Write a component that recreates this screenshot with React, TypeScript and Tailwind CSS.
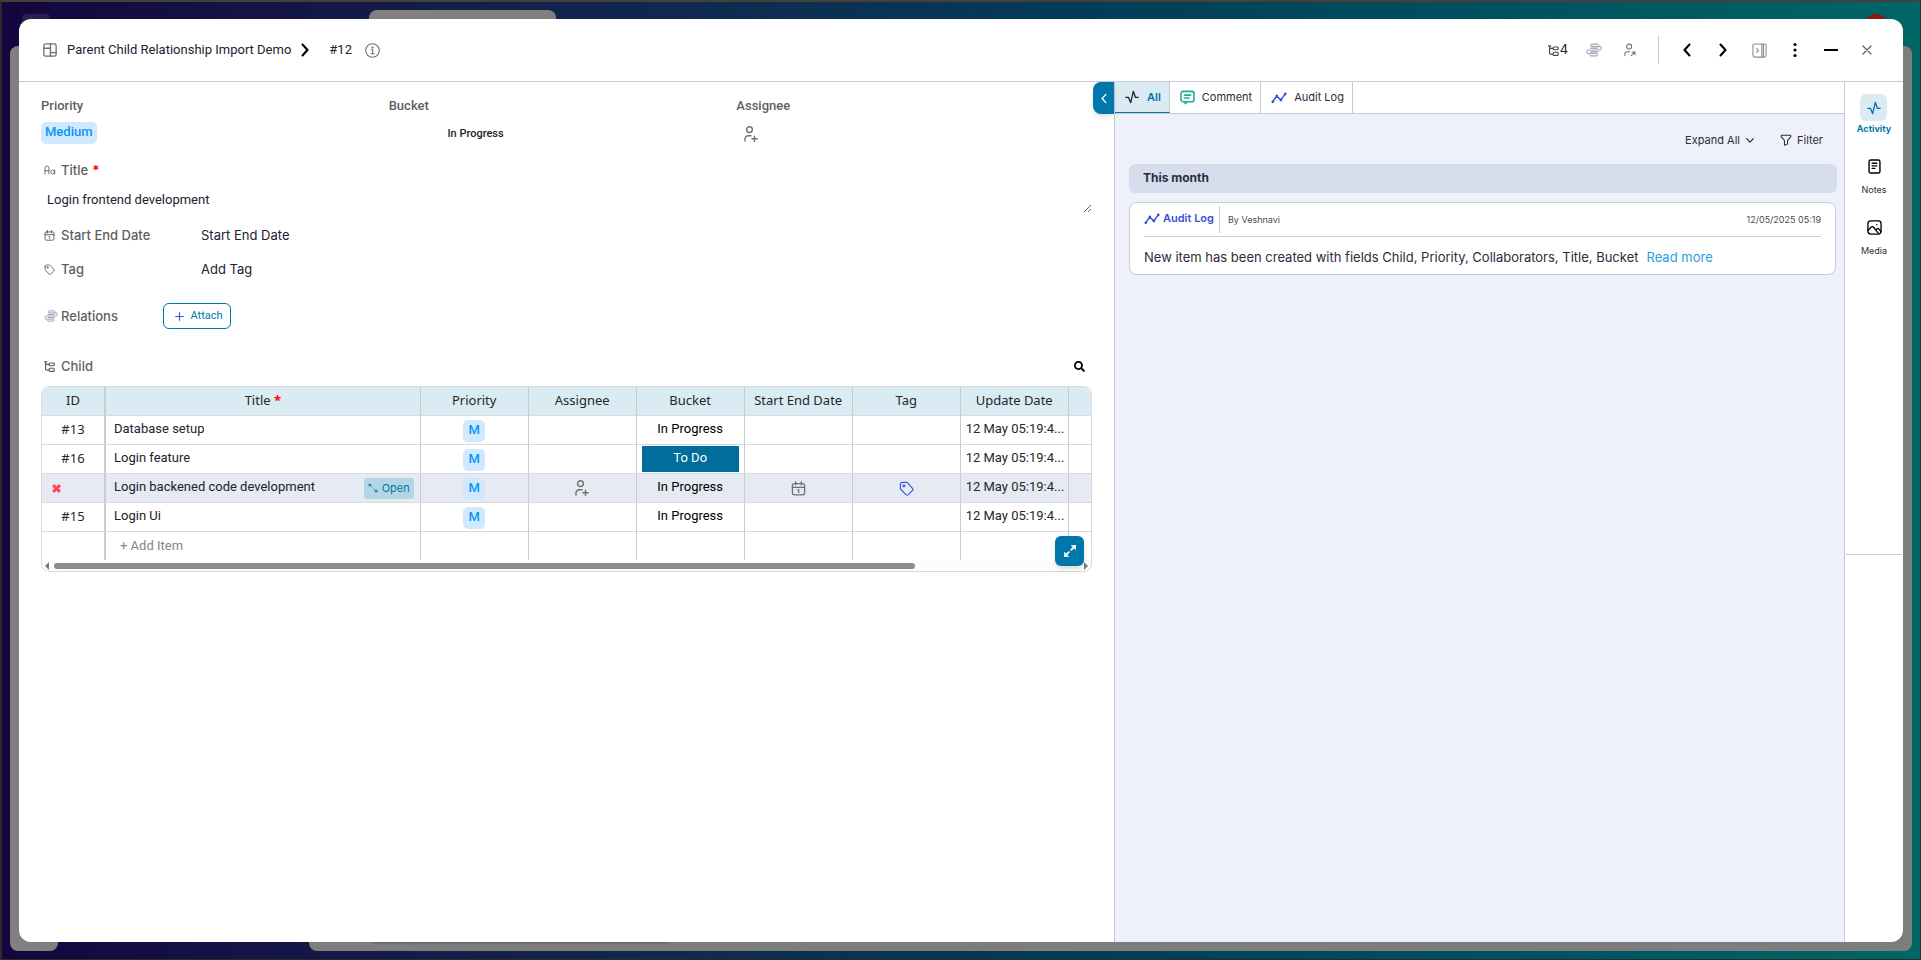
import { useState } from "react";
import type { ReactNode } from "react";
import { FaSearch } from "react-icons/fa";

type IconProps = { className?: string };

function Svg({ className = "", box = "0 0 16 16", width = 1.2, children }: IconProps & { box?: string; width?: number; children: ReactNode }) {
  return (
    <svg className={className} viewBox={box} fill="none" stroke="currentColor" strokeWidth={width} strokeLinecap="round" strokeLinejoin="round" aria-hidden="true">
      {children}
    </svg>
  );
}

const BoardIcon = ({ className }: IconProps) => (
  <Svg className={className} width={1.5}>
    <rect x="1" y="1" width="14" height="14" rx="2" />
    <path d="M8.500 1v14M1 6h7.500M8.500 11h6.500" />
  </Svg>
);

const InfoIcon = ({ className }: IconProps) => (
  <Svg className={className} width={1.2}>
    <circle cx="8" cy="8" r="7.200" />
    <path d="M6.700 7.200H8.200V11.300M6.500 11.400h3.300" />
    <circle cx="8" cy="4.800" r="0.600" fill="currentColor" />
  </Svg>
);

const TreeIcon = ({ className }: IconProps) => (
  <Svg className={className} box="0 0 14 14" width={1.5}>
    <path d="M2 1v9.500a1 1 0 0 0 1 1H6M2 4.300H6M0.800 1.200h2.700" />
    <rect x="6.500" y="2.500" width="6.500" height="3.500" rx="1.200" />
    <rect x="6.500" y="9.200" width="6.500" height="4" rx="1.200" />
  </Svg>
);

const RelationIcon = ({ className }: IconProps) => (
  <Svg className={className} box="0 0 18 16" width={1.1}>
    <rect x="5" y="5.500" width="8.500" height="5" fill="#cfd5e3" stroke="none" />
    <path d="M15.500 3.800H6.500a1.300 1.300 0 0 1 0-2.600H13a2 2 0 0 1 1.500 1M15.500 3.800a2.100 2.100 0 0 1 0 4.200H14" />
    <path d="M2.800 12.200h9a1.300 1.300 0 0 1 0 2.600H5.300a2 2 0 0 1-1.500-1M2.800 12.200a2.100 2.100 0 0 1 0-4.200H4.300" />
    <path d="M5 5.800h8.500M5 10.200h8.500" />
  </Svg>
);

const PersonLinkIcon = ({ className }: IconProps) => (
  <Svg className={className} box="0 0 14 16" width={1.3}>
    <circle cx="6" cy="4" r="2.900" />
    <path d="M1 14.500v-1.700a2.800 2.800 0 0 1 2.800-2.800H6.500M8.500 14.500l4-4M9.500 10.300h3.200v3.200" />
  </Svg>
);

const PersonAddIcon = ({ className }: IconProps) => (
  <Svg className={className} box="0 0 14 16" width={1.4}>
    <circle cx="5.500" cy="3.600" r="2.900" />
    <path d="M1 15v-2a3.200 3.200 0 0 1 3.200-3.200H7M10.500 10.200v5.200M7.900 12.800h5.300" />
  </Svg>
);

const PanelIcon = ({ className }: IconProps) => (
  <Svg className={className} width={1.2}>
    <rect x="1" y="1" width="14" height="14" rx="2" />
    <path d="M10.500 1v14M12.200 1v14M5 6l2 2-2 2" />
  </Svg>
);

const CalendarIcon = ({ className }: IconProps) => (
  <Svg className={className} width={1.4}>
    <rect x="1.500" y="2.800" width="13" height="12" rx="2" />
    <path d="M1.500 6.800h13M5 0.800v3.400M11 0.800v3.400M7.300 9.600h0.900v2.600" />
  </Svg>
);

const TagIcon = ({ className }: IconProps) => (
  <Svg className={className} width={1.3}>
    <path d="M1.500 3.500v4.200a2 2 0 0 0 .6 1.400l5.300 5.400a1.800 1.800 0 0 0 2.500 0l4.300-4.200a1.800 1.800 0 0 0 0-2.600L9.200 2.100A2 2 0 0 0 7.800 1.500H3.500a2 2 0 0 0-2 2z" />
    <circle cx="5.200" cy="5" r="1" />
  </Svg>
);

const LetterCaseIcon = ({ className }: IconProps) => (
  <Svg className={className} box="0 0 16 14" width={1.2}>
    <path d="M1 12.500V4.200A2.700 2.700 0 0 1 3.700 1.500a2.700 2.700 0 0 1 2.700 2.700v8.300M1 8h5.400M14.500 7v5.500" />
    <circle cx="11.700" cy="9.800" r="2.700" />
  </Svg>
);

const PulseIcon = ({ className }: IconProps) => (
  <Svg className={className} width={1.5}>
    <path d="M1 8.500h3L6.500 14.500 9.500 1.500 12 8.500h3" />
  </Svg>
);

const CommentIcon = ({ className }: IconProps) => (
  <Svg className={className} width={1.7}>
    <path d="M3.500 1.500h9a2.500 2.500 0 0 1 2.500 2.500v6a2.500 2.500 0 0 1-2.500 2.500H8L5.500 14.500V12.500h-2A2.500 2.500 0 0 1 1 10V4a2.500 2.500 0 0 1 2.500-2.500z" />
    <path d="M4.800 5.500h6.500M4.800 8.500h4.800" />
  </Svg>
);

const TrendIcon = ({ className }: IconProps) => (
  <Svg className={className} box="0 0 16 12" width={1.4}>
    <path d="M1.800 9.500 5.800 4 9.800 8 14 2.200" />
    <g fill="currentColor" stroke="none">
      <circle cx="1.800" cy="9.800" r="1.400" />
      <circle cx="5.800" cy="3.800" r="1.300" />
      <circle cx="9.900" cy="8" r="1.400" />
      <circle cx="14.200" cy="2" r="1.400" />
    </g>
  </Svg>
);

const FilterIcon = ({ className }: IconProps) => (
  <Svg className={className} box="0 0 14 14" width={1.2}>
    <path d="M1.500 1.500h11v1.800L8.800 7.500v4.300L5.200 13V7.500L1.500 3.300z" />
  </Svg>
);

const NotesIcon = ({ className }: IconProps) => (
  <Svg className={className} width={1.5}>
    <rect x="2.200" y="1" width="11.600" height="14" rx="1.800" />
    <path d="M5.500 4.500h5M5.500 7.300h5M5.500 10h3" />
  </Svg>
);

const MediaIcon = ({ className }: IconProps) => (
  <Svg className={className} width={1.4}>
    <rect x="1" y="1" width="14" height="14" rx="3" />
    <path d="M1.200 11 4.500 7.500a1.500 1.500 0 0 1 2.200 0L12 14M9.500 10.500l1-1a1.500 1.500 0 0 1 2 0L14.800 12M10.300 5h.2" />
  </Svg>
);

const Chevron = ({ className, left, width = 2.1 }: IconProps & { left?: boolean; width?: number }) => (
  <Svg className={className} box="0 0 8 14" width={width}>
    <path d={left ? "M6.500 1.500 1.500 7l5 5.500" : "M1.500 1.500 6.500 7l-5 5.500"} />
  </Svg>
);

const ExpandIcon = ({ className }: IconProps) => (
  <Svg className={className} box="0 0 14 14" width={1.8}>
    <path d="M8.200 5.800 12 2M5.800 8.200 2 12" />
    <path d="M8.500 1.500h4v4zM1.500 8.500v4h4z" fill="currentColor" strokeWidth="0.600" />
  </Svg>
);

const OpenIcon = ({ className }: IconProps) => (
  <Svg className={className} box="0 0 14 14" width={1.3}>
    <path d="M2 2l3.500 3.500M12 12 8.500 8.500" />
    <path d="M1.500 1.500h3L1.500 4.500zM12.500 12.500h-3l3-3z" fill="currentColor" strokeWidth="0.600" />
  </Svg>
);

type Row = { id: string; title: string; bucket: string; updated: string; active?: boolean };

const rows: Row[] = [
  { id: "#13", title: "Database setup", bucket: "In Progress", updated: "12 May 05:19:4..." },
  { id: "#16", title: "Login feature", bucket: "To Do", updated: "12 May 05:19:4..." },
  { id: "#14", title: "Login backened code development", bucket: "In Progress", updated: "12 May 05:19:4...", active: true },
  { id: "#15", title: "Login Ui", bucket: "In Progress", updated: "12 May 05:19:4..." },
];

const columns = ["Priority", "Assignee", "Bucket", "Start End Date", "Tag", "Update Date"];

function HeaderButton({ label, className = "", children }: { label: string; className?: string; children: ReactNode }) {
  return (
    <button type="button" aria-label={label} className={`flex h-8 w-9 items-center justify-center ${className}`}>
      {children}
    </button>
  );
}

function Backdrop() {
  return (
    <div aria-hidden="true" className="absolute inset-0 overflow-hidden border-2 border-r-1 border-b-1 border-[#2b2b2b] border-t-[#45403c] bg-linear-to-r from-[#14053f] via-[#023b56] via-55% to-[#006666]">
      <div className="absolute top-3 left-5 h-8 w-7 rounded bg-[#26204f]" />
      <div className="absolute top-2 left-[367px] h-8 w-[187px] rounded-lg bg-[#808080]" />
      <div className="absolute top-3 right-8 h-6 w-6 rounded-full bg-[#8a1a14]" />
      <div className="absolute top-11 bottom-2 left-2 w-12 rounded-lg bg-[#808080]" />
      <div className="absolute top-11 right-2 bottom-2 left-[307px] rounded-lg bg-[#7d7d7d]" />
      <div className="absolute bottom-4 left-[372px] h-4 w-[296px] bg-[#5c5c5c] blur-[1px]" />
    </div>
  );
}

function Header() {
  return (
    <header className="flex h-[63px] shrink-0 items-start justify-between border-b border-[#c6c8d3] pt-[15px] pr-[18px] pl-6">
      <div className="flex h-8 items-center font-[Roboto] text-[13px] text-[#20222e]">
        <BoardIcon className="size-[14px] text-[#6f6f6f]" />
        <a href="#board" className="ml-[10px]">Parent Child Relationship Import Demo</a>
        <Chevron className="mr-5 ml-[10px] h-[14px] w-2 text-black" />
        <span>#12</span>
        <InfoIcon className="ml-[13px] size-[15px] text-[#6f6f6f]" />
      </div>
      <div className="flex items-center">
        <HeaderButton label="Child items" className="gap-px text-[#4a4a55]">
          <TreeIcon className="size-[11px]" />
          <span className="font-[Inter] text-[13px] text-[#20222e]">4</span>
        </HeaderButton>
        <HeaderButton label="Relations" className="text-[#8d95a6]">
          <RelationIcon className="h-[14px] w-4" />
        </HeaderButton>
        <HeaderButton label="Share" className="text-[#6f6f6f]">
          <PersonLinkIcon className="h-[14px] w-3" />
        </HeaderButton>
        <div className="mx-[10px] h-7 w-px bg-[#c6c8d3]" />
        <HeaderButton label="Previous" className="text-black"><Chevron left className="h-[14px] w-2" /></HeaderButton>
        <HeaderButton label="Next" className="text-black"><Chevron className="h-[14px] w-2" /></HeaderButton>
        <HeaderButton label="Toggle panel" className="text-[#8a8d99]"><PanelIcon className="size-[15px]" /></HeaderButton>
        <HeaderButton label="More">
          <svg className="h-4 w-1" viewBox="0 0 4 16" aria-hidden="true">
            <circle cx="2" cy="2.500" r="1.600" />
            <circle cx="2" cy="8" r="1.600" />
            <circle cx="2" cy="13.500" r="1.600" />
          </svg>
        </HeaderButton>
        <HeaderButton label="Minimize"><span className="h-[2px] w-[14px] bg-black" /></HeaderButton>
        <HeaderButton label="Close" className="text-[#5f5f5f]">
          <Svg className="size-[10px]" box="0 0 10 10" width={1.2}><path d="M1 1l8 8M9 1 1 9" /></Svg>
        </HeaderButton>
      </div>
    </header>
  );
}

function FieldLabel({ icon, children }: { icon: ReactNode; children: ReactNode }) {
  return (
    <span className="flex items-center text-[13px] leading-5 font-medium text-[#5f5f5f]">
      <span className="flex w-5 justify-start pl-[3px]">{icon}</span>
      {children}
    </span>
  );
}

function Priority({ children }: { children: ReactNode }) {
  return (
    <span className="inline-flex h-[22px] min-w-[22px] items-center justify-center rounded-[5px] bg-[#d0e9ff] px-1 pb-[2px] font-[Roboto] text-[13px] font-medium text-[#0a95f5]">
      {children}
    </span>
  );
}

function ChildTable() {
  const [items] = useState(rows);

  return (
    <div className="relative rounded-lg border border-[#d9dadd]">
      <div className="overflow-hidden rounded-t-lg">
        <table className="w-full table-fixed border-separate border-spacing-0 font-['Noto_Sans'] text-[13px] leading-5 text-[#26262b] [&_td]:border-b [&_td]:border-[#d9dadd] [&_td:not(:last-child)]:border-r [&_td:not(:last-child)]:border-r-[#cbccd2] [&_th]:border-b [&_th]:border-[#d9dadd] [&_th:not(:last-child)]:border-r [&_th:not(:last-child)]:border-r-[#cbccd2] [&_tr>:first-child]:border-r-2">
          <colgroup>
            <col className="w-16" />
            <col className="w-[30%]" />
            {columns.map((c) => <col key={c} className="w-[108px]" />)}
            <col />
          </colgroup>
          <thead>
            <tr className="h-[29px] bg-[#daebf3] [&>th]:p-0 [&>th]:pb-[3px] [&>th]:font-normal">
              <th>ID</th>
              <th>Title <span className="font-bold text-[#f00]">*</span></th>
              {columns.map((c) => <th key={c}>{c}</th>)}
              <th aria-label="More columns" />
            </tr>
          </thead>
          <tbody className="text-center">
            {items.map((row) => (
              <tr key={row.id} className={`h-[29px] [&>td]:p-0 ${row.active ? "bg-[#e6eaf3]" : "bg-white"}`}>
                <td>
                  {row.active ? (
                    <button type="button" aria-label="Remove" className="flex w-full pl-[10px] text-[#ff4a55]">
                      <svg className="size-[9px]" viewBox="0 0 10 10" stroke="currentColor" strokeWidth="3.400" aria-hidden="true"><path d="M1.200 1.200l7.600 7.600M8.800 1.200 1.200 8.800" /></svg>
                    </button>
                  ) : (
                    <div className="pb-[2px]">{row.id}</div>
                  )}
                </td>
                <td>
                  <div className="flex items-center justify-between pr-[6px] pl-2 font-[Roboto]">
                    <span className="truncate pb-[2px] text-[#20222e]">{row.title}</span>
                    {row.active && (
                      <button type="button" className="flex h-[21px] w-[50px] items-center justify-center gap-1 rounded-[3px] bg-[#b4d5e4] font-[Inter] text-[11px] text-[#0077ab]">
                        <OpenIcon className="size-[10px]" />
                        Open
                      </button>
                    )}
                  </div>
                </td>
                <td><div className="flex justify-center pt-[2px]"><Priority>M</Priority></div></td>
                <td>{row.active && <PersonAddIcon className="mx-auto h-4 w-[14px] text-[#6f6f6f]" />}</td>
                <td>
                  {row.bucket === "To Do" ? (
                    <div className="mx-[5px] h-[26px] bg-[#006d9c] pt-[2px] font-[Roboto] text-white">{row.bucket}</div>
                  ) : (
                    <div className="pb-[2px] font-[Roboto] text-black">{row.bucket}</div>
                  )}
                </td>
                <td>{row.active && <CalendarIcon className="mx-auto size-[15px] text-[#6f6f6f]" />}</td>
                <td>{row.active && <TagIcon className="mx-auto size-[15px] text-[#3f55e0]" />}</td>
                <td><div className="overflow-hidden pb-[2px] pl-[5px] text-left font-[Roboto] whitespace-nowrap">{row.updated}</div></td>
                <td />
              </tr>
            ))}
            <tr className="h-7 [&>td]:border-b-0 [&>td]:p-0">
              <td />
              <td>
                <button type="button" className="flex pl-[14px] font-[Roboto] text-[#868686]">+ Add Item</button>
              </td>
              {columns.map((c) => <td key={c} />)}
              <td />
            </tr>
          </tbody>
        </table>
      </div>
      {/* scroll bar */}
      <div className="flex h-[11px] items-center rounded-b-lg bg-[#fcfcfc] px-[3px]">
        <svg className="h-2 w-1" viewBox="0 0 4 8" fill="#7d7d7d" aria-hidden="true"><path d="M4 0v8L0 4z" /></svg>
        <div className="mx-[5px] flex-1"><div className="h-[6px] w-[84%] rounded-full bg-[#8b8b8b]" /></div>
        <svg className="h-2 w-1" viewBox="0 0 4 8" fill="#7d7d7d" aria-hidden="true"><path d="M0 0v8l4-4z" /></svg>
      </div>
      <button type="button" aria-label="Expand table" className="absolute right-[7px] bottom-[5px] flex h-[30px] w-[29px] items-center justify-center rounded-md bg-[#0077ab] text-white shadow-md">
        <ExpandIcon className="size-[14px]" />
      </button>
    </div>
  );
}

function Details() {
  const [title, setTitle] = useState("Login frontend development");

  return (
    <main className="min-w-0 px-[22px] pt-[14px] font-[Inter]">
      <div className="mr-2 grid grid-cols-3 font-[Roboto]">
        <div>
          <div className="text-[13px] leading-5 font-medium text-[#5f5f5f]">Priority</div>
          <div className="mt-[6px] flex"><Priority>Medium</Priority></div>
        </div>
        <div>
          <div className="text-[13px] leading-5 font-medium text-[#5f5f5f]">Bucket</div>
          <div className="mt-2 w-1/2 text-center text-[11px] leading-5 font-medium text-[#20222e]">In Progress</div>
        </div>
        <div>
          <div className="text-[13px] leading-5 font-medium text-[#5f5f5f]">Assignee</div>
          <button type="button" aria-label="Add assignee" className="mt-[10px] ml-2 block text-[#6f6f6f]"><PersonAddIcon className="h-4 w-[14px]" /></button>
        </div>
      </div>

      <label className="mt-4 block">
        <FieldLabel icon={<LetterCaseIcon className="h-[10px] w-3" />}>
          Title <span className="ml-1 font-bold text-[#f00]">*</span>
        </FieldLabel>
        <textarea
          rows={1}
          value={title}
          onChange={(e) => setTitle(e.target.value)}
          className="mt-[7px] block h-[26px] w-full resize-y px-[6px] py-[3px] font-[Roboto] text-[13px] leading-5 text-[#20222e] outline-none"
        />
      </label>

      <div className="mt-3 flex flex-col gap-[14px] text-[13px] leading-5 text-[#20222e]">
        <div className="flex">
          <div className="w-40"><FieldLabel icon={<CalendarIcon className="size-[11px]" />}>Start End Date</FieldLabel></div>
          <button type="button">Start End Date</button>
        </div>
        <div className="flex">
          <div className="w-40"><FieldLabel icon={<TagIcon className="size-[11px]" />}>Tag</FieldLabel></div>
          <button type="button">Add Tag</button>
        </div>
      </div>

      <div className="mt-6 flex items-center">
        <div className="w-[122px]"><FieldLabel icon={<RelationIcon className="h-3 w-[14px] text-[#8d95a6]" />}>Relations</FieldLabel></div>
        <button type="button" className="flex h-[26px] w-[68px] items-center justify-center gap-[6px] rounded-md border border-[#0077ab] pl-1 font-[Roboto] text-[11px] text-[#0077ab]">
          <Svg className="size-[9px] text-[#3f55e0]" box="0 0 10 10" width={1.2}><path d="M5 0.700v8.600M0.700 5h8.600" /></Svg>
          Attach
        </button>
      </div>

      <div className="mt-[27px] mb-[10px] flex items-center justify-between pr-[7px]">
        <FieldLabel icon={<TreeIcon className="size-[11px]" />}>Child</FieldLabel>
        <button type="button" aria-label="Search"><FaSearch className="size-[11px] text-black" /></button>
      </div>
      <ChildTable />
    </main>
  );
}

function Activity() {
  return (
    <section className="relative min-w-0 border-l border-[#c6c8d3] bg-[#eef1fa] font-[Inter] text-[#2b2d3a]">
      <button type="button" aria-label="Collapse activity" className="absolute top-0 -left-[22px] flex h-8 w-[21px] items-center justify-center rounded-l-lg bg-[#0077ab] text-white shadow-md">
        <Chevron left className="h-[11px] w-[6px]" width={1.8} />
      </button>
      <nav className="flex h-8 border-b border-[#c6c8d3] bg-white text-[11px]">
        <button type="button" className="flex items-center gap-2 border-r border-b border-r-[#c6c8d3] border-b-[#0077ab] bg-[#daebf3] pr-2 pl-[10px] font-semibold text-[#0077ab]">
          <PulseIcon className="size-[14px] text-[#20222e]" />
          All
        </button>
        <button type="button" className="flex items-center gap-[7px] border-r border-[#c6c8d3] pr-2 pl-[10px]">
          <CommentIcon className="size-[15px] text-[#1db096]" />
          Comment
        </button>
        <button type="button" className="flex items-center gap-[7px] border-r border-[#c6c8d3] pr-2 pl-[10px]">
          <TrendIcon className="h-3 w-4 text-[#3c50d6]" />
          Audit Log
        </button>
      </nav>

      <div className="flex flex-col pr-[7px] pl-[14px]">
        <div className="mt-4 flex h-5 items-center justify-end gap-[26px] pr-[14px] text-[11px]">
          <button type="button" className="flex items-center gap-[6px]">
            Expand All
            <Svg className="h-[5px] w-2" box="0 0 8 5" width={1.2}><path d="M0.700 0.700 4 4.200 7.300 0.700" /></Svg>
          </button>
          <button type="button" className="flex items-center gap-[5px]">
            <FilterIcon className="size-3" />
            Filter
          </button>
        </div>
        <h2 className="mt-[14px] flex h-[29px] items-center rounded-md bg-[#d6ddec] px-[14px] pb-[2px] text-[12px] font-bold">This month</h2>
        <article className="mt-[9px] mr-px rounded-lg border border-[#cbccd2] bg-white px-[14px] pt-[3px]">
          <div className="flex h-[31px] items-start border-b border-[#cbccd2]">
            <div className="flex h-[27px] items-center gap-[3px] border-r border-[#cbccd2] pr-[5px] pb-[2px] text-[11px] font-semibold text-[#3c50d6]">
              <TrendIcon className="h-3 w-4" />
              Audit Log
            </div>
            <span className="ml-2 text-[9px] leading-[27px] text-[#4a4a55]">By Veshnavi</span>
            <time className="ml-auto text-[9px] leading-[27px] text-[#4a4a55]">12/05/2025 05:19</time>
          </div>
          <p className="pt-[10px] pb-[7px] text-[13px] leading-5">
            New item has been created with fields Child, Priority, Collaborators, Title, Bucket
            <a href="#more" className="ml-2 text-[#1f9fdb]">Read more</a>
          </p>
        </article>
      </div>
    </section>
  );
}

function SideItem({ label, active, children }: { label: string; active?: boolean; children: ReactNode }) {
  return (
    <button type="button" className={`flex flex-col items-center text-[9px] leading-3 ${active ? "gap-[2px] font-bold text-[#0077ab]" : "gap-1 text-[#2b2d3a]"}`}>
      <span className={`flex size-[27px] items-center justify-center rounded-md ${active ? "bg-[#daebf3]" : "text-black"}`}>{children}</span>
      {label}
    </button>
  );
}

export default function App() {
  return (
    <div className="relative flex min-h-screen pt-[19px] pr-[18px] pb-[18px] pl-[19px]">
      <Backdrop />
      <div role="dialog" aria-label="Parent Child Relationship Import Demo" className="relative flex min-w-0 flex-1 flex-col overflow-hidden rounded-xl bg-white">
        <Header />
        <div className="grid flex-1 grid-cols-[3fr_2fr_59px]">
          <Details />
          <Activity />
          <aside className="flex flex-col items-center border-l border-[#c6c8d3] px-px pt-3 font-[Inter]">
            <div className="flex h-[461px] w-full flex-col items-center gap-[18px] border-b border-[#c6c8d3]">
              <SideItem label="Activity" active><PulseIcon className="size-[14px]" /></SideItem>
              <SideItem label="Notes"><NotesIcon className="size-[15px]" /></SideItem>
              <SideItem label="Media"><MediaIcon className="size-[15px]" /></SideItem>
            </div>
          </aside>
        </div>
      </div>
    </div>
  );
}
